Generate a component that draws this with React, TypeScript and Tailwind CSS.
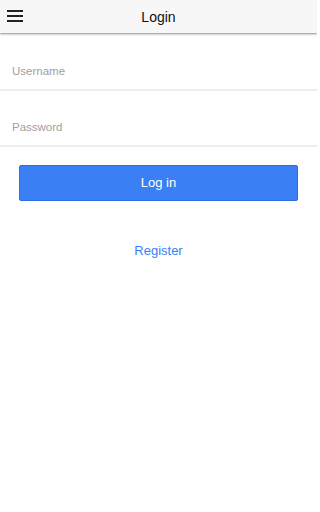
import React from "react";

export default function App() {
  return (
    <div className="w-[317px] h-[512px] bg-white overflow-hidden" style={{ fontFamily: '"Liberation Sans", Arial, sans-serif' }}>
      <div className="relative h-[33px] bg-[#f7f7f7] flex items-center justify-center shadow-[0_1px_2px_rgba(0,0,0,0.45)]">
        <div className="absolute left-[7px] top-[10px] flex flex-col gap-[3px]">
          <div className="w-[16px] h-[2px] bg-[#222]" />
          <div className="w-[16px] h-[2px] bg-[#222]" />
          <div className="w-[16px] h-[2px] bg-[#222]" />
        </div>
        <span className="text-[14px] text-[#111] leading-none">Login</span>
      </div>
      <div className="flex flex-col pt-[2px]">
        <div className="h-[56px] flex items-end pb-[10px] pl-[12px] border-b-2 border-[#eeeeee]">
          <span className="text-[11.5px] text-[#a0a0a0] leading-[16px]">Username</span>
        </div>
        <div className="h-[56px] flex items-end pb-[10px] pl-[12px] border-b-2 border-[#eeeeee]">
          <span className="text-[11.5px] text-[#a0a0a0] leading-[16px]">Password</span>
        </div>
      </div>
      <div className="px-[19px] pt-[18px]">
        <div className="h-[36px] bg-[#3a80f4] border border-[#2b6fe3] rounded-[2px] flex items-center justify-center">
          <span className="text-white text-[13px]">Log in</span>
        </div>
      </div>
      <div className="flex justify-center pt-[40px]">
        <span className="text-[#387ef5] text-[13px]">Register</span>
      </div>
    </div>
  );
}
